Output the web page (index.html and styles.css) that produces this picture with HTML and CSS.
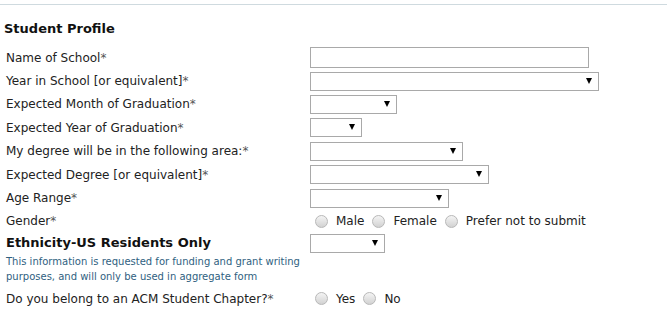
FILE: index.html
```html
<!DOCTYPE html>
<html lang="en">
<head>
  <meta charset="UTF-8">
  <title>Student Profile</title>
  <link rel="stylesheet" href="styles.css">
</head>
<body>
  <div class="rule"></div>
  <h2>Student Profile</h2>

  <form class="profile">
    <div class="row">
      <label for="school">Name of School<span class="req">*</span></label>
      <input type="text" id="school" class="text-input">
    </div>
    <div class="row">
      <label for="year">Year in School [or equivalent]<span class="req">*</span></label>
      <span class="select w-year"><select id="year"></select></span>
    </div>
    <div class="row">
      <label for="gradMonth">Expected Month of Graduation<span class="req">*</span></label>
      <span class="select w-month"><select id="gradMonth"></select></span>
    </div>
    <div class="row">
      <label for="gradYear">Expected Year of Graduation<span class="req">*</span></label>
      <span class="select w-gyear"><select id="gradYear"></select></span>
    </div>
    <div class="row">
      <label for="area">My degree will be in the following area:<span class="req">*</span></label>
      <span class="select w-area"><select id="area"></select></span>
    </div>
    <div class="row">
      <label for="degree">Expected Degree [or equivalent]<span class="req">*</span></label>
      <span class="select w-degree"><select id="degree"></select></span>
    </div>
    <div class="row">
      <label for="age">Age Range<span class="req">*</span></label>
      <span class="select w-age"><select id="age"></select></span>
    </div>
    <div class="row">
      <label>Gender<span class="req">*</span></label>
      <div class="radios">
        <input type="radio" name="gender" id="male"><label for="male">Male</label>
        <input type="radio" name="gender" id="female"><label for="female">Female</label>
        <input type="radio" name="gender" id="nosubmit"><label for="nosubmit">Prefer not to submit</label>
      </div>
    </div>
    <div class="row row-top">
      <div>
        <label for="ethnicity" class="strong">Ethnicity-US Residents Only</label>
        <p class="note">This information is requested for funding and grant writing purposes, and will only be used in aggregate form</p>
      </div>
      <span class="select w-eth"><select id="ethnicity"></select></span>
    </div>
    <div class="row">
      <label>Do you belong to an ACM Student Chapter?<span class="req">*</span></label>
      <div class="radios">
        <input type="radio" name="acm" id="yes"><label for="yes">Yes</label>
        <input type="radio" name="acm" id="no"><label for="no">No</label>
      </div>
    </div>
  </form>
</body>
</html>
```

FILE: styles.css
```css
body {
  margin: 0;
  background-color: #fff;
  color: #222;
  font-family: "DejaVu Sans", Verdana, sans-serif;
  font-size: 12px;
}
.rule {
  margin-top: 4px;
  height: 1px;
  background-color: #cfdadf;
}
h2 {
  margin: 16px 0 9px 4px;
  font-size: 13px;
  line-height: 16px;
  font-weight: bold;
  color: #111;
}
.profile {
  padding-left: 6px;
}
.row {
  display: grid;
  grid-template-columns: 304px 1fr;
  align-items: center;
  height: 23.4px;
}
.row-top {
  align-items: start;
  height: auto;
  padding-top: 1px;
  margin-bottom: 3px;
}
.req {
  color: #555;
}
.text-input {
  box-sizing: border-box;
  width: 279px;
  height: 21px;
  margin: 0;
  border: 1px solid #a9a9a9;
  padding: 2px 4px;
  font: inherit;
}
.select {
  position: relative;
  display: inline-block;
  height: 19px;
}
.select select {
  appearance: none;
  -webkit-appearance: none;
  box-sizing: border-box;
  width: 100%;
  height: 19px;
  margin: 0;
  border: 1px solid #a9a9a9;
  border-radius: 0;
  background-color: #fff;
  font: inherit;
}
.select::after {
  content: "";
  position: absolute;
  right: 7px;
  top: 6px;
  border-left: 3px solid transparent;
  border-right: 3px solid transparent;
  border-top: 6px solid #000;
}
.w-year { width: 289px; }
.w-month { width: 87px; }
.w-gyear { width: 52px; }
.w-area { width: 153px; }
.w-degree { width: 179px; }
.w-age { width: 139px; }
.w-eth { width: 75px; }
.radios {
  display: flex;
  align-items: center;
  padding-left: 5px;
}
.radios input {
  appearance: none;
  -webkit-appearance: none;
  width: 13px;
  height: 13px;
  margin: 0 8px 0 0;
  border: 1px solid #b8b8b8;
  border-radius: 50%;
  background: linear-gradient(#f4f4f4, #d2d2d2);
}
.radios label {
  margin-right: 8px;
}
.strong {
  display: block;
  font-size: 13px;
  font-weight: bold;
  line-height: 18px;
  color: #111;
}
.note {
  margin: 2px 0 0;
  font-size: 10px;
  line-height: 15px;
  color: #2f5f7f;
}
```
